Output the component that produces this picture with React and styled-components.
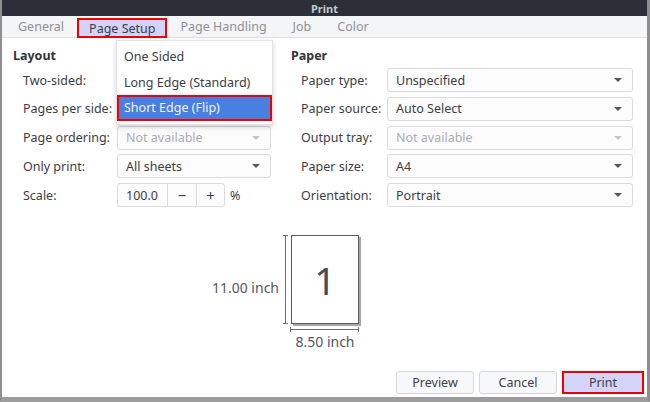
import styled, { createGlobalStyle, css } from 'styled-components';

const GlobalStyle = createGlobalStyle`
    body {
        margin: 0;
        background: #ffffff;
        font-family: 'Noto Sans', 'Open Sans', sans-serif;
    }
`;

const Window = styled.div`
    position: relative;
    width: 650px;
    height: 402px;
    box-sizing: border-box;
    border-left: 2px solid #8e8e8e;
    border-right: 3px solid #8e8e8e;
    border-bottom: 5px solid #9c9c9c;
    background: #ffffff;
    display: flex;
    flex-direction: column;
    font-size: 12.5px;
    color: #3d3d46;
`;

const TitleBar = styled.div`
    height: 16px;
    background: #2c2f37;
    color: #c6cad2;
    font-size: 11px;
    font-weight: bold;
    display: flex;
    align-items: center;
    justify-content: center;
`;

const TabBar = styled.div`
    height: 21px;
    background: #f4f5f7;
    border-bottom: 1px solid #dcdfe3;
    display: flex;
    padding-left: 3px;
`;

const Tab = styled.div`
    display: flex;
    align-items: center;
    padding: 0 13px;
    color: #8e9197;
    ${(p) =>
        p.$active &&
        css`
            color: #3b3b48;
            background: #d4d4fb;
            border: 2px solid #ee0000;
            padding: 0 10px;
            margin-top: 2px;
            margin-bottom: -1px;
            box-sizing: border-box;
        `}
`;

const Body = styled.div`
    flex: 1;
    display: flex;
    flex-direction: column;
`;

const Columns = styled.div`
    display: flex;
    padding: 10px 14px 0 11px;
`;

const Section = styled.div`
    width: ${(p) => p.$width || 'auto'};
    flex: ${(p) => (p.$width ? 'none' : '1')};
`;

const Heading = styled.div`
    font-weight: bold;
    line-height: 16px;
    color: #333339;
`;

const Rows = styled.div`
    display: grid;
    grid-template-columns: ${(p) => p.$labelWidth}px 1fr;
    grid-auto-rows: 24px;
    row-gap: 4.75px;
    margin-top: 4px;
    padding-left: 10px;
    align-items: center;
`;

const Label = styled.div`
    white-space: nowrap;
`;

const Combo = styled.div`
    width: ${(p) => p.$width}px;
    height: 24px;
    box-sizing: border-box;
    border: 1px solid #d8dade;
    border-radius: 3px;
    background: #fcfcfd;
    display: flex;
    align-items: center;
    justify-content: space-between;
    padding: 0 10px 0 8px;
    color: ${(p) => (p.$disabled ? '#a9acb1' : '#3d3d46')};
`;

const Arrow = styled.span`
    width: 0;
    height: 0;
    margin-left: auto;
    border-left: 4px solid transparent;
    border-right: 4px solid transparent;
    border-top: 4px solid ${(p) => (p.$disabled ? '#c4c6ca' : '#55565c')};
`;

const ScaleRow = styled.div`
    display: flex;
    align-items: center;
    gap: 5px;
`;

const Spin = styled.div`
    display: flex;
    height: 24px;
    box-sizing: border-box;
    border: 1px solid #d8dade;
    border-radius: 3px;
    background: #fcfcfd;
`;

const SpinEntry = styled.div`
    width: 49px;
    display: flex;
    align-items: center;
    padding-left: 8px;
    box-sizing: border-box;
`;

const SpinButton = styled.div`
    width: ${(p) => p.$width}px;
    border-left: 1px solid #d8dade;
    display: flex;
    align-items: center;
    justify-content: center;
    font-size: 15px;
`;

const Preview = styled.div`
    display: grid;
    grid-template-columns: 1fr 70px 1fr;
    margin-top: 28px;
    padding-left: 3px;
    font-size: 14px;
`;

const SideLabel = styled.div`
    display: flex;
    justify-content: flex-end;
    align-items: center;
    gap: 3px;
    height: 91px;
    margin-right: 2px;
    color: #55565e;
`;

const SideText = styled.div`
    padding-top: 14px;
    white-space: nowrap;
`;

const PageSheet = styled.div`
    width: 68px;
    height: 89px;
    box-sizing: border-box;
    border: 1px solid #5c5d66;
    background: #ffffff;
    box-shadow: 2px 2px 0 #a6a7ab;
    display: flex;
    align-items: center;
    justify-content: center;
    font-size: 38px;
    color: #4a4b55;
`;

const BottomRuler = styled.div`
    grid-column: 2;
    display: flex;
    flex-direction: column;
    align-items: center;
    width: 68px;
    color: #55565e;
`;

const RulerText = styled.div`
    line-height: 16px;
    white-space: nowrap;
`;

const Footer = styled.div`
    margin-top: auto;
    display: flex;
    justify-content: flex-end;
    gap: 5px;
    padding: 0 3px 3px 0;
`;

const Button = styled.div`
    width: ${(p) => p.$width}px;
    height: 23px;
    box-sizing: border-box;
    border: 1px solid #d6d8dc;
    border-radius: 3px;
    background: #f7f8fa;
    display: flex;
    align-items: center;
    justify-content: center;
    ${(p) =>
        p.$default &&
        css`
            background: #d4d4fb;
            border: 2px solid #ee0000;
            border-radius: 0;
        `}
`;

const Menu = styled.div`
    position: absolute;
    left: 114px;
    top: 40px;
    width: 155px;
    padding: 3px 0;
    background: #ffffff;
    border: 1px solid #e2e3e6;
    box-shadow: 0 2px 5px rgba(0, 0, 0, 0.18);
`;

const MenuItem = styled.div`
    height: 25.5px;
    box-sizing: border-box;
    display: flex;
    align-items: center;
    padding-left: 7px;
    ${(p) =>
        p.$selected &&
        css`
            background: #4a7fe2;
            color: #eef3fd;
            border: 2px solid #ee0000;
            padding-left: 5px;
        `}
`;

function VRuler() {
    return (
        <svg width="7" height="91" viewBox="0 0 7 91">
            <path d="M1 0.5h5M3.5 0.5v88M1 88.5h5" stroke="#6e6f76" strokeWidth="1" fill="none" />
        </svg>
    );
}

function HRuler() {
    return (
        <svg width="70" height="8" viewBox="0 0 70 8">
            <path d="M0.5 1v5M0.5 3.5h68M68.5 1v5" stroke="#6e6f76" strokeWidth="1" fill="none" />
        </svg>
    );
}

const tabs = ['General', 'Page Setup', 'Page Handling', 'Job', 'Color'];

function App() {
    return (
        <Window>
            <GlobalStyle />
            <TitleBar>Print</TitleBar>
            <TabBar>
                {tabs.map((t) => (
                    <Tab key={t} $active={t === 'Page Setup'}>
                        {t}
                    </Tab>
                ))}
            </TabBar>
            <Body>
                <Columns>
                    <Section $width="278px">
                        <Heading>Layout</Heading>
                        <Rows $labelWidth={94}>
                            <Label>Two-sided:</Label>
                            {/* covered by the open menu */}
                            <Combo $width={154}>
                                <Arrow />
                            </Combo>
                            <Label>Pages per side:</Label>
                            <Combo $width={154}>
                                <Arrow />
                            </Combo>
                            <Label>Page ordering:</Label>
                            <Combo $width={154} $disabled>
                                Not available
                                <Arrow $disabled />
                            </Combo>
                            <Label>Only print:</Label>
                            <Combo $width={154}>
                                All sheets
                                <Arrow />
                            </Combo>
                            <Label>Scale:</Label>
                            <ScaleRow>
                                <Spin>
                                    <SpinEntry>100.0</SpinEntry>
                                    <SpinButton $width={28}>−</SpinButton>
                                    <SpinButton $width={27}>+</SpinButton>
                                </Spin>
                                %
                            </ScaleRow>
                        </Rows>
                    </Section>
                    <Section>
                        <Heading>Paper</Heading>
                        <Rows $labelWidth={86}>
                            <Label>Paper type:</Label>
                            <Combo $width={246}>
                                Unspecified
                                <Arrow />
                            </Combo>
                            <Label>Paper source:</Label>
                            <Combo $width={246}>
                                Auto Select
                                <Arrow />
                            </Combo>
                            <Label>Output tray:</Label>
                            <Combo $width={246} $disabled>
                                Not available
                                <Arrow $disabled />
                            </Combo>
                            <Label>Paper size:</Label>
                            <Combo $width={246}>
                                A4
                                <Arrow />
                            </Combo>
                            <Label>Orientation:</Label>
                            <Combo $width={246}>
                                Portrait
                                <Arrow />
                            </Combo>
                        </Rows>
                    </Section>
                </Columns>
                <Preview>
                    <SideLabel>
                        <SideText>11.00 inch</SideText>
                        <VRuler />
                    </SideLabel>
                    <PageSheet>1</PageSheet>
                    <div />
                    <BottomRuler>
                        <HRuler />
                        <RulerText>8.50 inch</RulerText>
                    </BottomRuler>
                </Preview>
                <Footer>
                    <Button $width={78}>Preview</Button>
                    <Button $width={78}>Cancel</Button>
                    <Button $width={82} $default>
                        Print
                    </Button>
                </Footer>
            </Body>
            <Menu>
                <MenuItem>One Sided</MenuItem>
                <MenuItem>Long Edge (Standard)</MenuItem>
                <MenuItem $selected>Short Edge (Flip)</MenuItem>
            </Menu>
        </Window>
    );
}

export default App;
